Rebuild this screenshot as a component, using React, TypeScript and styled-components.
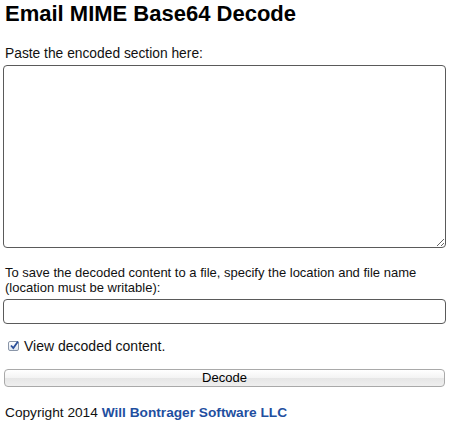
import React from "react";
import styled, { createGlobalStyle } from "styled-components";

const Global = createGlobalStyle`
  html, body { margin: 0; padding: 0; background: #ffffff; }
  body { font-family: "Liberation Sans", Arial, Helvetica, sans-serif; color: #111; }
`;

const Page = styled.div`
  width: 450px;
  box-sizing: border-box;
  padding: 1px 4px 0 4px;
  display: flex;
  flex-direction: column;
`;

const Title = styled.h1`
  margin: 0 0 0 1px;
  font-size: 22px;
  line-height: 25px;
  font-weight: bold;
  color: #000;
`;

const Label = styled.div<{ $top: number; $size: number }>`
  margin: ${(p) => p.$top}px 0 0 1px;
  font-size: ${(p) => p.$size}px;
  line-height: ${(p) => (p.$size >= 13.5 ? 16 : 15)}px;
  color: #111;
`;

const TextArea = styled.textarea`
  margin: 3px 0 0 -1px;
  width: 443px;
  height: 183px;
  box-sizing: border-box;
  border: 1px solid #5a5a5a;
  border-radius: 4px;
  background: #fff;
  resize: vertical;
  outline: none;
  display: block;
`;

const TextInput = styled.input`
  margin: 4px 0 0 -1px;
  width: 443px;
  height: 25px;
  box-sizing: border-box;
  border: 1px solid #5a5a5a;
  border-radius: 4px;
  background: #fff;
  outline: none;
  display: block;
`;

const CheckRow = styled.label`
  margin: 14px 0 0 4px;
  display: flex;
  align-items: center;
  gap: 5px;
  font-size: 14px;
  line-height: 16px;
  color: #111;
`;

const CheckBox = styled.span`
  width: 11px;
  height: 10px;
  box-sizing: border-box;
  border: 1px solid #8a96a8;
  border-radius: 2px;
  background: linear-gradient(#ffffff, #dfe6f0);
  display: inline-block;
  position: relative;
`;

const Check = styled.svg`
  position: absolute;
  left: 0px;
  top: -2px;
`;

const Button = styled.button`
  margin: 15px 0 0 0;
  width: 441px;
  height: 18px;
  box-sizing: border-box;
  border: 1px solid #a9a9a9;
  border-radius: 4px;
  background: linear-gradient(#ffffff 0%, #f3f3f3 50%, #e6e6e6 51%, #efefef 100%);
  font-family: "Liberation Sans", Arial, sans-serif;
  font-size: 13px;
  line-height: 14px;
  color: #000;
  padding: 0;
  display: block;
`;

const Footer = styled.div`
  margin: 18px 0 0 1px;
  font-size: 13.7px;
  line-height: 16px;
  color: #111;
`;

const Link = styled.a`
  color: #1f4fa0;
  font-weight: bold;
  text-decoration: none;
`;

export default function App() {
  return (
    <>
      <Global />
      <Page>
        <Title>Email MIME Base64 Decode</Title>
        <Label $top={20} $size={13.8}>Paste the encoded section here:</Label>
        <TextArea />
        <Label $top={17} $size={13}>
          To save the decoded content to a file, specify the location and file name
          <br />
          (location must be writable):
        </Label>
        <TextInput />
        <CheckRow>
          <CheckBox>
            <Check width="11" height="11" viewBox="0 0 11 11">
              <path d="M2 5.5 L4.3 8 L9 1.5" fill="none" stroke="#2a4f9a" strokeWidth="1.8" />
            </Check>
          </CheckBox>
          View decoded content.
        </CheckRow>
        <Button>Decode</Button>
        <Footer>
          Copyright 2014 <Link href="#">Will Bontrager Software LLC</Link>
        </Footer>
      </Page>
    </>
  );
}
